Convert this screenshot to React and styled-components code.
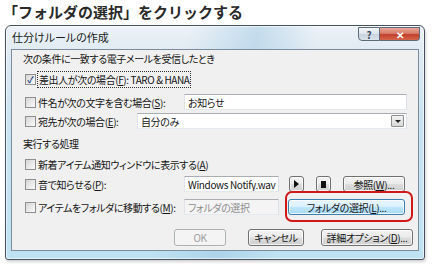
import React from "react";
import styled, { createGlobalStyle, css } from "styled-components";

const GlobalStyle = createGlobalStyle`
  html, body {
    margin: 0;
    padding: 0;
    background: #ffffff;
  }
  body {
    font-family: "Noto Sans CJK JP", "Noto Sans", sans-serif;
    width: 433px;
    height: 266px;
    overflow: hidden;
  }
`;

const Page = styled.div`
  width: 433px;
  height: 266px;
  display: flex;
  flex-direction: column;
`;

const Heading = styled.h1`
  margin: 0;
  height: 25px;
  line-height: 24px;
  padding-left: 3px;
  font-size: 15px;
  font-weight: 700;
  color: #2a2a2a;
`;

const Window = styled.div`
  margin-left: 5px;
  width: 420px;
  height: 235px;
  box-sizing: border-box;
  border: 1px solid #46525e;
  border-radius: 6px 6px 3px 3px;
  padding: 0 5px 8px 5px;
  display: flex;
  flex-direction: column;
  background:
    linear-gradient(100deg, rgba(255,255,255,0) 40%, rgba(150,195,225,0.45) 55%, rgba(255,255,255,0) 68%),
    linear-gradient(180deg, #edf2f7 0%, #dfeaf3 12%, #c9e3f1 40%, #bfe2f2 100%);
  box-shadow: 1px 2px 3px rgba(0, 0, 0, 0.18), inset 0 0 0 1px rgba(255,255,255,0.6);
`;

const TitleBar = styled.div`
  height: 23px;
  display: flex;
  justify-content: space-between;
  align-items: flex-start;
`;

const Title = styled.span`
  font-size: 11px;
  line-height: 23px;
  padding-left: 1px;
  color: #1a1a1a;
  font-feature-settings: "palt";
`;

const Caption = styled.div`
  display: flex;
  margin-top: 1px;
  margin-right: -1px;
`;

const CaptionBtn = styled.div`
  height: 14px;
  width: ${(p) => p.$w}px;
  box-sizing: border-box;
  display: flex;
  align-items: center;
  justify-content: center;
  font-size: 10px;
  font-weight: 700;
  border: 1px solid #5d6a78;
  ${(p) =>
    p.$close
      ? css`
          border-left: none;
          border-radius: 0 0 4px 0;
          color: #ffffff;
          background: linear-gradient(180deg, #e9a99c 0%, #d87a68 45%, #c0412b 55%, #d8644c 100%);
        `
      : css`
          border-radius: 0 0 0 4px;
          color: #3b4a5a;
          background: linear-gradient(180deg, #f3f6f9 0%, #dfe6ee 45%, #c9d3de 55%, #dbe4ec 100%);
        `}
`;

const Client = styled.div`
  flex: 1;
  border: 1px solid #7d8c9c;
  background: #f0f0f0;
  display: flex;
  flex-direction: column;
  font-size: 10px;
  letter-spacing: -0.4px;
  color: #141414;
  font-feature-settings: "palt";
`;

const GroupLabel = styled.div`
  height: 18px;
  line-height: 18px;
  padding-left: 11px;
  margin-top: ${(p) => p.$gap || 0}px;
`;

const Row = styled.div`
  height: 18px;
  display: flex;
  align-items: center;
  padding: 0 11px 0 13px;
  margin-top: ${(p) => p.$gap || 0}px;
`;

const Check = styled.span`
  width: 11px;
  height: 11px;
  box-sizing: border-box;
  flex-shrink: 0;
  margin-right: 2px;
  border: 1px solid #8f8f8f;
  background: linear-gradient(135deg, #d6d6d6 0%, #ececec 60%, #fbfbfb 100%);
  display: flex;
  align-items: center;
  justify-content: center;
  font-size: 9px;
  line-height: 1;
  letter-spacing: 0;
  color: #1f3f7a;
  font-weight: 700;
`;

const LabelCell = styled.div`
  display: flex;
  align-items: center;
  width: ${(p) => (p.$w ? `${p.$w}px` : "auto")};
  flex-shrink: 0;
  white-space: nowrap;
`;

const Text = styled.span`
  white-space: nowrap;
  ${(p) =>
    p.$focus &&
    css`
      outline: 1px dotted #333;
      outline-offset: 0;
      padding: 0 1px;
    `}
`;

const Field = styled.div`
  height: 16px;
  box-sizing: border-box;
  width: ${(p) => (p.$w ? `${p.$w}px` : "auto")};
  flex: ${(p) => (p.$w ? "none" : "1")};
  display: flex;
  align-items: center;
  padding-left: 3px;
  border: 1px solid #abadb3;
  border-color: #abadb3 #dbdfe6 #e3e9ef #e2e3ea;
  background: ${(p) => (p.$disabled ? "#f4f4f4" : "#ffffff")};
  color: ${(p) => (p.$disabled ? "#8d8d8d" : "#141414")};
  letter-spacing: ${(p) => (p.$latin ? "-0.35px" : "-0.4px")};
  white-space: nowrap;
  overflow: hidden;
`;

const FieldText = styled.span`
  flex: 1;
`;

const DropArrow = styled.span`
  width: 13px;
  height: 12px;
  box-sizing: border-box;
  margin-right: 2px;
  border: 1px solid #8e8f8f;
  border-radius: 1px;
  background: linear-gradient(180deg, #f4f4f4 0%, #e6e6e6 50%, #d8d8d8 100%);
  display: flex;
  align-items: center;
  justify-content: center;
  &::after {
    content: "";
    border-left: 3px solid transparent;
    border-right: 3px solid transparent;
    border-top: 3px solid #222;
  }
`;

const Button = styled.div`
  height: ${(p) => p.$h || 16}px;
  width: ${(p) => p.$w}px;
  margin-left: ${(p) => p.$ml || 0}px;
  box-sizing: border-box;
  flex-shrink: 0;
  border: 1px solid #707070;
  border-radius: 3px;
  background: linear-gradient(180deg, #f2f2f2 0%, #ebebeb 48%, #dddddd 52%, #cfcfcf 100%);
  box-shadow: inset 0 0 0 1px rgba(255, 255, 255, 0.75);
  display: flex;
  align-items: center;
  justify-content: center;
  white-space: nowrap;
  color: #141414;
  ${(p) =>
    p.$hot &&
    css`
      border-color: #3c7fb1;
      background: linear-gradient(180deg, #eaf6fd 0%, #d9f0fc 48%, #bee6fd 52%, #a7d9f5 100%);
    `}
  ${(p) =>
    p.$disabled &&
    css`
      border-color: #adb2b5;
      background: #f4f4f4;
      color: #9c9c9c;
      box-shadow: none;
    `}
`;

const PlayGlyph = styled.span`
  border-top: 4px solid transparent;
  border-bottom: 4px solid transparent;
  border-left: 5px solid #111;
`;

const StopGlyph = styled.span`
  width: 5px;
  height: 7px;
  background: #111;
`;

const Highlight = styled.div`
  position: relative;
  margin-left: 9px;
  &::after {
    content: "";
    position: absolute;
    top: -8px;
    bottom: -7px;
    left: -3px;
    right: -8px;
    border: 2.5px solid #d11818;
    border-radius: 7px;
    pointer-events: none;
  }
`;

const Footer = styled.div`
  height: 17px;
  margin-top: 13px;
  display: flex;
  justify-content: flex-end;
  padding-right: 5px;
`;

const App = () => {
  return (
    <Page>
      <GlobalStyle />
      <Heading>「フォルダの選択」をクリックする</Heading>
      <Window>
        <TitleBar>
          <Title>仕分けルールの作成</Title>
          <Caption>
            <CaptionBtn $w={22}>?</CaptionBtn>
            <CaptionBtn $w={40} $close>
              ✕
            </CaptionBtn>
          </Caption>
        </TitleBar>
        <Client>
          <GroupLabel>次の条件に一致する電子メールを受信したとき</GroupLabel>
          <Row $gap={2}>
            <Check>✓</Check>
            <Text $focus>
              差出人が次の場合(<u>F</u>): TARO &amp; HANA
            </Text>
          </Row>
          <Row $gap={5}>
            <LabelCell $w={159}>
              <Check />
              <Text>
                件名が次の文字を含む場合(<u>S</u>):
              </Text>
            </LabelCell>
            <Field>お知らせ</Field>
          </Row>
          <Row $gap={1}>
            <LabelCell $w={112}>
              <Check />
              <Text>
                宛先が次の場合(<u>E</u>):
              </Text>
            </LabelCell>
            <Field>
              <FieldText>自分のみ</FieldText>
              <DropArrow />
            </Field>
          </Row>
          <GroupLabel $gap={5}>実行する処理</GroupLabel>
          <Row $gap={2}>
            <Check />
            <Text>
              新着アイテム通知ウィンドウに表示する(<u>A</u>)
            </Text>
          </Row>
          <Row $gap={2}>
            <LabelCell $w={159}>
              <Check />
              <Text>
                音で知らせる(<u>P</u>):
              </Text>
            </LabelCell>
            <Field $w={95} $latin>
              Windows Notify.wav
            </Field>
            <Button $w={15} $ml={10}>
              <PlayGlyph />
            </Button>
            <Button $w={15} $ml={12}>
              <StopGlyph />
            </Button>
            <Button $w={62} $ml={12}>
              参照(<u>W</u>)...
            </Button>
          </Row>
          <Row $gap={5}>
            <LabelCell $w={159}>
              <Check />
              <Text>
                アイテムをフォルダに移動する(<u>M</u>):
              </Text>
            </LabelCell>
            <Field $w={95} $disabled>
              フォルダの選択
            </Field>
            <Highlight>
              <Button $w={117} $hot>
                フォルダの選択(<u>L</u>)...
              </Button>
            </Highlight>
          </Row>
          <Footer>
            <Button $w={52} $h={17} $disabled>
              OK
            </Button>
            <Button $w={56} $h={17} $ml={22}>
              キャンセル
            </Button>
            <Button $w={92} $h={17} $ml={17}>
              詳細オプション(<u>D</u>)...
            </Button>
          </Footer>
        </Client>
      </Window>
    </Page>
  );
};

export default App;
